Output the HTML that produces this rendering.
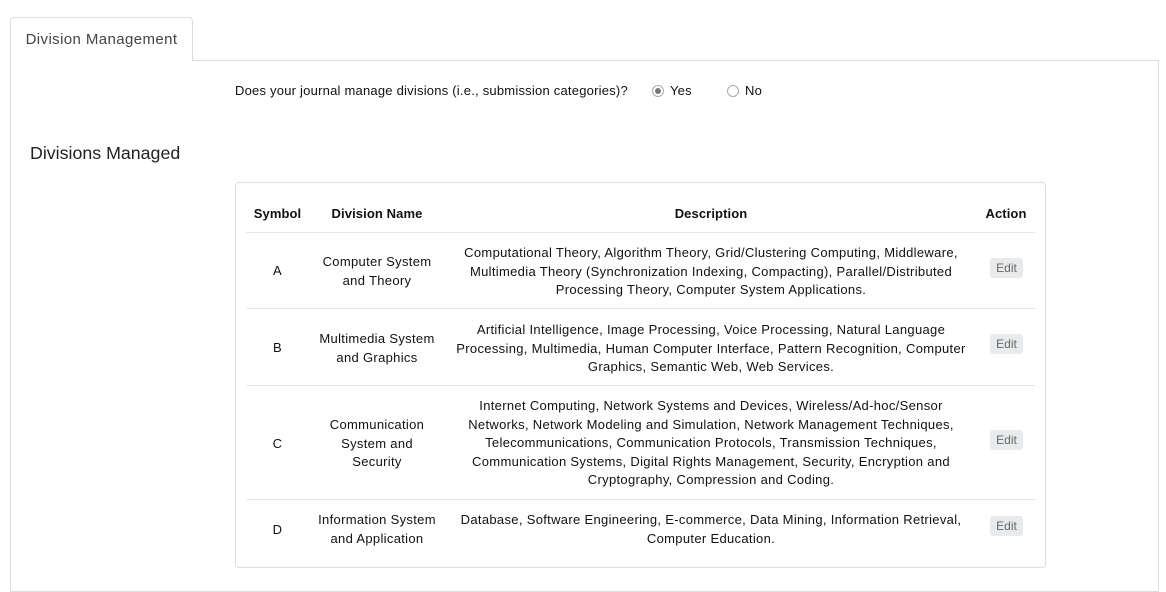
<!DOCTYPE html>
<html><head><meta charset="utf-8"><style>
body{margin:0;background:#fff;font-family:"Liberation Sans",sans-serif;color:#111;width:1166px;height:578px;overflow:hidden;position:relative}
.tab{position:absolute;left:10px;top:17px;width:181px;height:43px;border:1px solid #ddd;border-bottom:none;border-radius:4px 4px 0 0;background:#fff;z-index:2;font-size:15px;letter-spacing:0.4px;color:#444;line-height:44px;text-align:center}
.panel{position:absolute;left:10px;top:60px;width:1147px;height:530px;border:1px solid #ddd}
.q{position:absolute;left:235px;top:83px;font-size:13px;letter-spacing:0.22px}
.radio{position:absolute;top:85px;width:12px;height:12px;border:1px solid #aaa;border-radius:50%;box-sizing:border-box}
.radio.on::after{content:"";position:absolute;left:2px;top:2px;width:6px;height:6px;border-radius:50%;background:#777}
.rl{position:absolute;top:83px;font-size:13px;letter-spacing:0.2px}
h2{position:absolute;left:30px;top:143px;margin:0;font-weight:normal;font-size:17.8px;color:#222}
.card{position:absolute;left:235px;top:182px;width:809px;height:384px;border:1px solid #ddd;border-radius:4px}
.c{position:absolute;text-align:center;font-size:13px;line-height:18.5px;letter-spacing:0.32px}
.h{font-weight:bold;top:205px;letter-spacing:0.1px}
.line{position:absolute;left:246px;width:789px;height:1px;background:#e3e7ea}
.edit{position:absolute;left:990px;width:33px;height:20px;background:#e8eaec;border-radius:3px;font-size:12px;color:#666;text-align:center;line-height:20px}
</style></head><body>
<div class="tab">Division Management</div>
<div class="panel"></div>
<div class="q">Does your journal manage divisions (i.e., submission categories)?</div>
<div class="radio on" style="left:652px"></div><div class="rl" style="left:670px">Yes</div>
<div class="radio" style="left:727px"></div><div class="rl" style="left:745px">No</div>
<h2>Divisions Managed</h2>
<div class="card"></div>
<div class="c h" style="left:245px;width:65px">Symbol</div>
<div class="c h" style="left:312px;width:130px">Division Name</div>
<div class="c h" style="left:450px;width:522px">Description</div>
<div class="c h" style="left:976px;width:60px">Action</div>
<div class="line" style="top:232px"></div>
<div class="line" style="top:308px"></div>
<div class="line" style="top:385px"></div>
<div class="line" style="top:499px"></div>

<div class="c" style="left:245px;width:65px;top:262px">A</div>
<div class="c" style="left:312px;width:130px;top:253px">Computer System<br>and Theory</div>
<div class="c" style="left:450px;width:522px;top:244px">Computational Theory, Algorithm Theory, Grid/Clustering Computing, Middleware,<br>Multimedia Theory (Synchronization Indexing, Compacting), Parallel/Distributed<br>Processing Theory, Computer System Applications.</div>
<div class="edit" style="top:258px">Edit</div>

<div class="c" style="left:245px;width:65px;top:339px">B</div>
<div class="c" style="left:312px;width:130px;top:330px">Multimedia System<br>and Graphics</div>
<div class="c" style="left:450px;width:522px;top:321px">Artificial Intelligence, Image Processing, Voice Processing, Natural Language<br>Processing, Multimedia, Human Computer Interface, Pattern Recognition, Computer<br>Graphics, Semantic Web, Web Services.</div>
<div class="edit" style="top:334px">Edit</div>

<div class="c" style="left:245px;width:65px;top:435px">C</div>
<div class="c" style="left:312px;width:130px;top:416px">Communication<br>System and<br>Security</div>
<div class="c" style="left:450px;width:522px;top:397px">Internet Computing, Network Systems and Devices, Wireless/Ad-hoc/Sensor<br>Networks, Network Modeling and Simulation, Network Management Techniques,<br>Telecommunications, Communication Protocols, Transmission Techniques,<br>Communication Systems, Digital Rights Management, Security, Encryption and<br>Cryptography, Compression and Coding.</div>
<div class="edit" style="top:430px">Edit</div>

<div class="c" style="left:245px;width:65px;top:521px">D</div>
<div class="c" style="left:312px;width:130px;top:511px">Information System<br>and Application</div>
<div class="c" style="left:450px;width:522px;top:511px">Database, Software Engineering, E-commerce, Data Mining, Information Retrieval,<br>Computer Education.</div>
<div class="edit" style="top:516px">Edit</div>
</body></html>
